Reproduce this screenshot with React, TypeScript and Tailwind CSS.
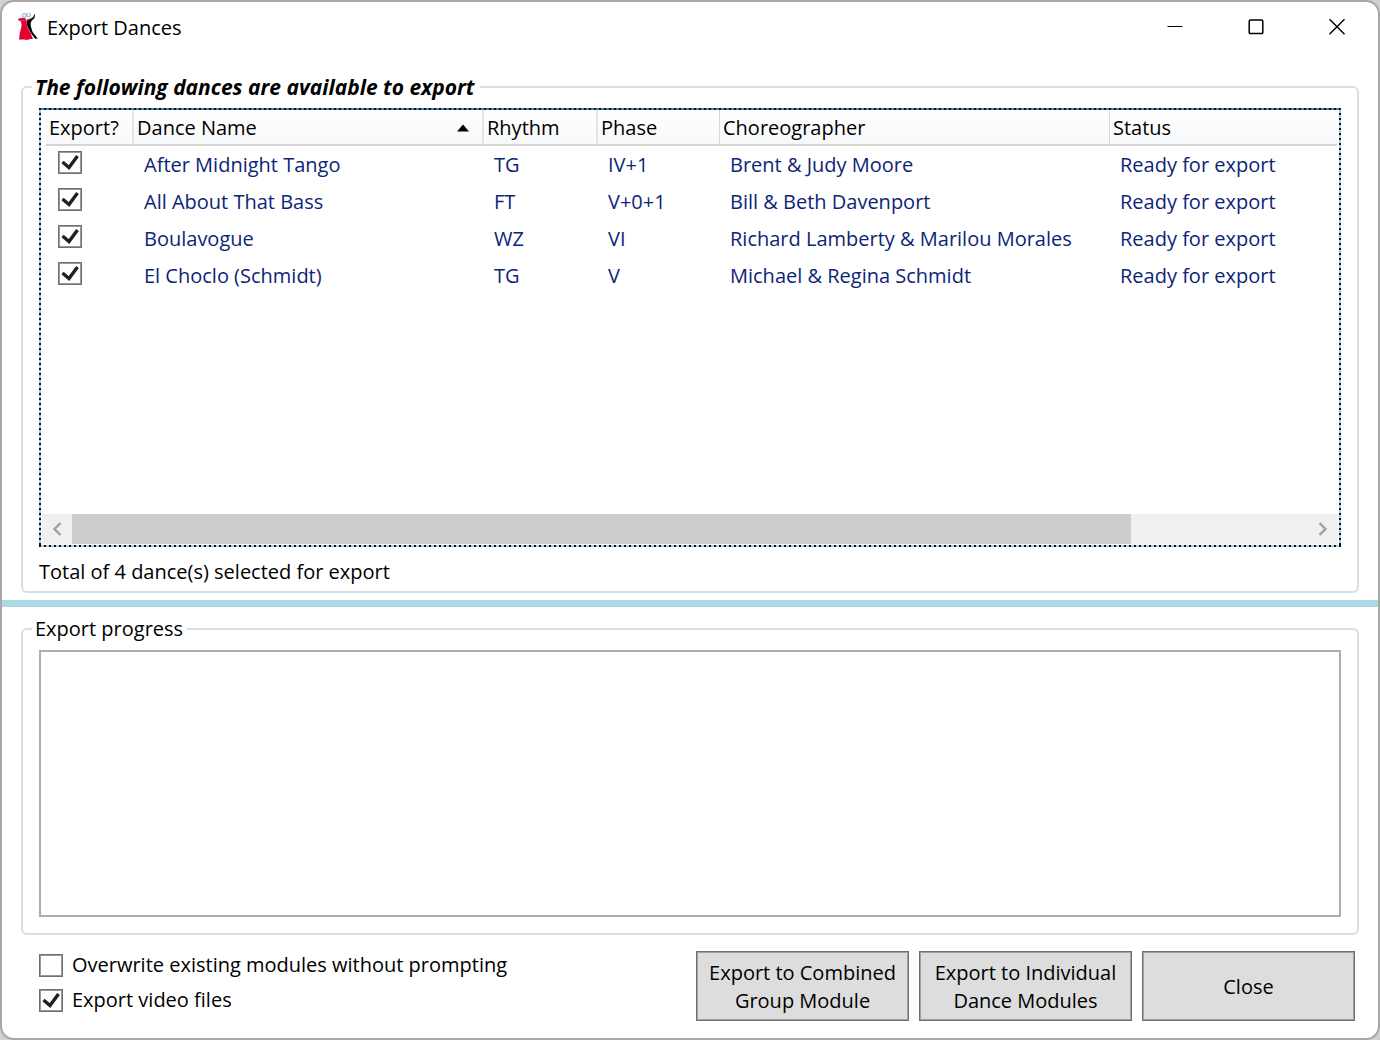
import React, { useState } from 'react';

interface Dance {
  name: string;
  rhythm: string;
  phase: string;
  choreographer: string;
  status: string;
  selected: boolean;
}

const initialDances: Dance[] = [
  { name: 'After Midnight Tango', rhythm: 'TG', phase: 'IV+1', choreographer: 'Brent & Judy Moore', status: 'Ready for export', selected: true },
  { name: 'All About That Bass', rhythm: 'FT', phase: 'V+0+1', choreographer: 'Bill & Beth Davenport', status: 'Ready for export', selected: true },
  { name: 'Boulavogue', rhythm: 'WZ', phase: 'VI', choreographer: 'Richard Lamberty & Marilou Morales', status: 'Ready for export', selected: true },
  { name: 'El Choclo (Schmidt)', rhythm: 'TG', phase: 'V', choreographer: 'Michael & Regina Schmidt', status: 'Ready for export', selected: true },
];

interface CheckBoxProps {
  checked: boolean;
  onChange: () => void;
  id?: string;
  label?: string;
}

const CheckBox: React.FC<CheckBoxProps> = ({ checked, onChange, id, label }) => (
  <span className="grid h-[23px] w-6 shrink-0">
    <input
      type="checkbox"
      id={id}
      aria-label={label}
      checked={checked}
      onChange={onChange}
      className="peer col-start-1 row-start-1 h-[23px] w-6 appearance-none border border-[#707070] bg-white inset-ring inset-ring-[#9a9a9a]"
    />
    <svg
      viewBox="0 0 24 23"
      aria-hidden="true"
      className="pointer-events-none invisible col-start-1 row-start-1 h-[23px] w-6 peer-checked:visible"
    >
      <path d="M4.5 11 L11 16.5 L19.5 5" fill="none" stroke="#212121" strokeWidth="3.4" />
    </svg>
  </span>
);

const DancersIcon: React.FC = () => (
  <svg viewBox="0 0 20 28" aria-hidden="true" className="h-7 w-5">
    <path d="M9 7 L13 5.5 L15.3 4 L16.2 1.2 L17 1.6 L16.6 5 L13.5 8 L12.6 10.5 L13 14 L14.6 19 L19.8 25.6 L17 25.8 L13.5 21 L9.5 14 L8.5 10 Z" fill="#0a0a0a" />
    <path d="M0 6 L3 5 L7 5 L8.5 7.5 L8.6 10.5 L9.2 14 L12.6 20 L15 26 L12 26 L9.5 27 L6 26.4 L1 26.6 L1.8 20 L3.6 13 L3 8.6 L0.2 7 Z" fill="#e4002f" />
    <path d="M3 7.4 L9 7 L14 5" fill="none" stroke="#c7586a" strokeWidth="0.8" />
    <circle cx="6.2" cy="2.6" r="1.9" fill="#fff" stroke="#7b8fd0" strokeWidth="0.9" />
    <circle cx="10.6" cy="1.8" r="1.9" fill="#fff" stroke="#6fa0d8" strokeWidth="0.9" />
  </svg>
);

const TitleBar: React.FC = () => (
  <header className="flex h-[50px] items-center pr-px pl-4">
    <DancersIcon />
    <h1 className="ml-[9px] flex-1 pt-0.5 text-[20px] leading-7">Export Dances</h1>
    <button type="button" aria-label="Minimize" className="flex h-full w-[81px] items-center justify-center">
      <svg viewBox="0 0 16 16" className="size-4">
        <path d="M0.5 7.5 H15.5" stroke="#000" />
      </svg>
    </button>
    <button type="button" aria-label="Maximize" className="flex h-full w-[81px] items-center justify-center">
      <svg viewBox="0 0 16 16" className="size-4">
        <rect x="1.2" y="1" width="13.6" height="13.6" rx="1.2" fill="none" stroke="#000" strokeWidth="1.5" />
      </svg>
    </button>
    <button type="button" aria-label="Close window" className="flex h-full w-[81px] items-center justify-center">
      <svg viewBox="0 0 16 16" className="size-4">
        <path d="M0.5 0.2 L15.5 15.2 M15.5 0.2 L0.5 15.2" stroke="#000" strokeWidth="1.4" />
      </svg>
    </button>
  </header>
);

const headCell = 'h-9 border-b-2 border-[#d5d5d5] p-0 pt-0.5 pl-[3px] text-left font-normal';
const divider = 'border-r-2 border-r-[#e3e6e8]';
const thinDivider = 'border-r border-r-[#d5d8da]';
const actionButton =
  'h-[70px] w-[213px] border border-[#707070] bg-[#ddd] pt-0.5 inset-ring inset-ring-[#a0a0a0]';

const App: React.FC = () => {
  const [dances, setDances] = useState(initialDances);
  const [overwrite, setOverwrite] = useState(false);
  const [video, setVideo] = useState(true);

  const toggle = (index: number) =>
    setDances(dances.map((d, i) => (i === index ? { ...d, selected: !d.selected } : d)));

  const selectedCount = dances.filter((d) => d.selected).length;

  return (
    <div className="min-h-screen bg-[#d0d0d0]">
      <main className="flex min-h-screen flex-col rounded-[14px] border-2 border-[#a8a8a8] bg-white font-['Open_Sans','Noto_Sans',sans-serif] text-[20px] leading-7 text-black">
        <TitleBar />

        <fieldset className="mx-[19px] mt-[21px] min-w-0 rounded-md border-2 border-[#d5dfe5] px-4 pt-[7px] pb-[5px]">
          <legend className="-ml-[7px] pr-1.5 pl-[3px] text-[21px] leading-7 font-bold italic">
            The following dances are available to export
          </legend>

          {/* Focused list with a dotted focus rectangle */}
          <div className="p-[2px] [background:repeating-linear-gradient(90deg,#111_0_2px,#3c7fb1_2px_5px)_top/100%_2px_no-repeat,repeating-linear-gradient(90deg,#111_0_2px,#a9d0ea_2px_5px)_bottom/100%_2px_no-repeat,repeating-linear-gradient(#111_0_2px,#a9d0ea_2px_5px)_left/2px_100%_no-repeat,repeating-linear-gradient(#111_0_2px,#a9d0ea_2px_5px)_right/2px_100%_no-repeat]">
            <div className="flex h-[435px] flex-col bg-white">
              <div className="flex-1 overflow-hidden pr-[2px] pl-[5px]">
                <table className="w-full table-fixed border-separate border-spacing-0">
                  <colgroup>
                    <col className="w-[88px]" />
                    <col className="w-[350px]" />
                    <col className="w-[114px]" />
                    <col className="w-[122px]" />
                    <col className="w-[390px]" />
                    <col />
                  </colgroup>
                  <thead className="bg-linear-to-b from-white to-[#f7f8f9]">
                    <tr>
                      <th scope="col" className={`${headCell} ${divider}`}>Export?</th>
                      <th scope="col" aria-sort="ascending" className={`${headCell} ${divider}`}>
                        <span className="flex items-center justify-between pr-3">
                          Dance Name
                          <svg viewBox="0 0 14 8" className="h-2 w-3.5">
                            <path d="M1 7.5 L7 0.5 L13 7.5 Z" />
                          </svg>
                        </span>
                      </th>
                      <th scope="col" className={`${headCell} ${divider}`}>Rhythm</th>
                      <th scope="col" className={`${headCell} ${thinDivider}`}>Phase</th>
                      <th scope="col" className={`${headCell} ${thinDivider}`}>Choreographer</th>
                      <th scope="col" className={headCell}>Status</th>
                    </tr>
                  </thead>
                  <tbody className="whitespace-nowrap text-[#0c2577]">
                    {dances.map((dance, i) => (
                      <tr key={dance.name} className="h-[37px]">
                        <td className="p-0 pb-1 pl-3">
                          <CheckBox checked={dance.selected} onChange={() => toggle(i)} label={`Export ${dance.name}`} />
                        </td>
                        <td className="p-0 pl-2.5">{dance.name}</td>
                        <td className="p-0 pl-2.5">{dance.rhythm}</td>
                        <td className="p-0 pl-2.5">{dance.phase}</td>
                        <td className="p-0 pl-2.5">{dance.choreographer}</td>
                        <td className="p-0 pl-2.5">{dance.status}</td>
                      </tr>
                    ))}
                  </tbody>
                </table>
              </div>

              {/* Horizontal scroll bar */}
              <div className="mx-px mb-px flex h-[30px] bg-[#f0f0f0]">
                <button type="button" aria-label="Scroll left" className="flex w-[30px] items-center justify-center">
                  <svg viewBox="0 0 10 14" className="h-3.5 w-2.5">
                    <path d="M8.5 1 L2.5 7 L8.5 13" fill="none" stroke="#a0a0a0" strokeWidth="2.4" />
                  </svg>
                </button>
                <div className="flex-1">
                  <div className="h-full w-6/7 bg-[#cdcdcd]" />
                </div>
                <button type="button" aria-label="Scroll right" className="flex w-[30px] items-center justify-center">
                  <svg viewBox="0 0 10 14" className="h-3.5 w-2.5">
                    <path d="M1.5 1 L7.5 7 L1.5 13" fill="none" stroke="#a0a0a0" strokeWidth="2.4" />
                  </svg>
                </button>
              </div>
            </div>
          </div>

          <p className="mt-[11px]">Total of {selectedCount} dance(s) selected for export</p>
        </fieldset>

        <div role="separator" className="mt-[7px] h-[7px] bg-[#add8e6]" />

        <fieldset className="mx-[19px] mt-2 flex min-w-0 flex-1 flex-col rounded-md border-2 border-[#d5dfe5] px-4 pt-[7px] pb-4">
          <legend className="-ml-[7px] pr-1 pl-[3px]">Export progress</legend>
          <textarea
            readOnly
            aria-label="Export progress"
            className="block min-h-[267px] w-full flex-1 resize-none border-2 border-[#abadb3] bg-white outline-none"
          />
        </fieldset>

        <footer className="mt-4 flex justify-between pr-[23px] pb-[17px] pl-[37px]">
          <div className="flex flex-col gap-[7px]">
            <div className="flex items-center gap-[9px]">
              <CheckBox id="overwrite" checked={overwrite} onChange={() => setOverwrite(!overwrite)} />
              <label htmlFor="overwrite">Overwrite existing modules without prompting</label>
            </div>
            <div className="flex items-center gap-[9px]">
              <CheckBox id="video" checked={video} onChange={() => setVideo(!video)} />
              <label htmlFor="video">Export video files</label>
            </div>
          </div>
          <div className="flex gap-2.5">
            <button type="button" className={actionButton}>
              Export to Combined
              <br />
              Group Module
            </button>
            <button type="button" className={actionButton}>
              Export to Individual
              <br />
              Dance Modules
            </button>
            <button type="button" className={actionButton}>
              Close
            </button>
          </div>
        </footer>
      </main>
    </div>
  );
};

export default App;
